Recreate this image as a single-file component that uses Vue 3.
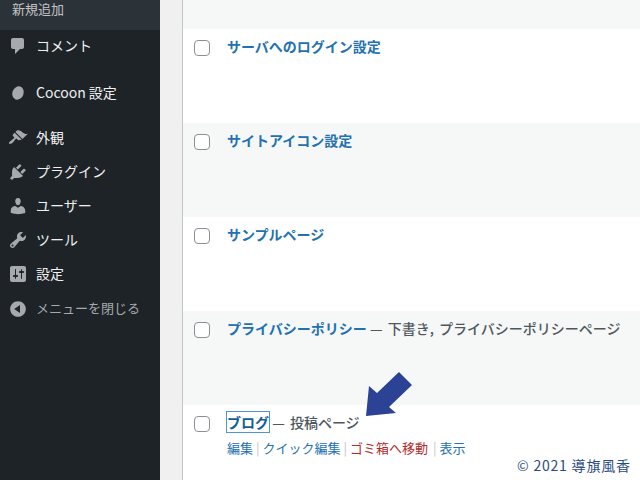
<script setup>
const menu = [
  { label: 'コメント', height: 47, icon: 'M5 2h9c1.1 0 2 .9 2 2v7c0 1.1-.9 2-2 2h-2l-5 5v-5H5c-1.1 0-2-.9-2-2V4c0-1.1.9-2 2-2z' },
  { label: 'Cocoon 設定', height: 45, cocoon: true },
  { label: '外観', height: 34, icon: 'M14.48 11.06L7.41 3.99l1.5-1.5c.5-.56 2.3-.47 3.51.32 1.21.8 1.43 1.28 2.91 2.1 1.18.64 2.45 1.26 4.45.85zm-.71.71L6.7 4.7 4.93 6.47c-.39.39-.39 1.02 0 1.41l1.06 1.06c.39.39.39 1.03 0 1.42-.6.6-1.43 1.11-2.21 1.69-.35.26-.7.53-1.01.84C1.43 13.23.65 15.06 1.3 15.7c.65.65 2.48-.13 3.8-1.47.31-.31.58-.66.85-1.01.57-.78 1.08-1.61 1.69-2.21.39-.39 1.02-.39 1.41 0l1.06 1.06c.39.39 1.02.39 1.41 0z' },
  { label: 'プラグイン', height: 34, icon: 'M13.11 4.36L9.87 7.6 8 5.73l3.24-3.24c.35-.34 1.05-.2 1.56.32.52.51.66 1.21.31 1.55zm-8 1.77l.91-1.12 9.01 9.01-1.19.84c-.71.71-2.63 1.16-3.82 1.16H6.14L4.9 17.26c-.59.59-1.54.59-2.12 0-.59-.58-.59-1.53 0-2.12l1.24-1.24v-3.88c0-1.13.4-3.19 1.09-3.89zm7.26 3.97l3.24-3.24c.34-.35 1.04-.21 1.55.31.52.51.66 1.21.31 1.55l-3.24 3.25z' },
  { label: 'ユーザー', height: 34, icon: 'M10 9.25c-2.27 0-2.73-3.44-2.73-3.44C7 4.02 7.82 2 9.97 2c2.16 0 2.98 2.02 2.71 3.81 0 0-.41 3.44-2.68 3.44zm0 2.57L12.72 10c2.39 0 4.52 2.33 4.52 4.53v2.49s-3.65 1.13-7.24 1.13c-3.65 0-7.24-1.13-7.24-1.13v-2.49c0-2.25 1.94-4.48 4.47-4.48z' },
  { label: 'ツール', height: 34, icon: 'M16.68 9.77c-1.34 1.34-3.3 1.67-4.95.99l-5.41 6.52c-.99.99-2.59.99-3.58 0s-.99-2.59 0-3.57l6.52-5.42c-.68-1.65-.35-3.61.99-4.95 1.28-1.28 3.12-1.62 4.72-1.06l-2.89 2.89 2.82 2.82 2.86-2.87c.53 1.58.18 3.39-1.08 4.65zM3.81 16.21c.4.39 1.04.39 1.43 0 .4-.4.4-1.04 0-1.43-.39-.4-1.03-.4-1.43 0-.39.39-.39 1.03 0 1.43z' },
  { label: '設定', height: 35, icon: 'M18 16V4c0-1.1-.9-2-2-2H4c-1.1 0-2 .9-2 2v12c0 1.1.9 2 2 2h12c1.1 0 2-.9 2-2zM8 11h1c.55 0 1 .45 1 1s-.45 1-1 1H8v1.5c0 .28-.22.5-.5.5s-.5-.22-.5-.5V13H6c-.55 0-1-.45-1-1s.45-1 1-1h1V5.5c0-.28.22-.5.5-.5s.5.22.5.5V11zm5-2h-1c-.55 0-1-.45-1-1s.45-1 1-1h1V5.5c0-.28.22-.5.5-.5s.5.22.5.5V7h1c.55 0 1 .45 1 1s-.45 1-1 1h-1v5.5c0 .28-.22.5-.5.5s-.5-.22-.5-.5V9z' },
  { label: 'メニューを閉じる', height: 34, muted: true, icon: 'M10 2.16c4.33 0 7.84 3.51 7.84 7.84s-3.51 7.84-7.84 7.84S2.16 14.33 2.16 10 5.71 2.16 10 2.16zm2 11.72V6.12L6.18 9.97z' }
]

const rows = [
  { title: 'サーバへのログイン設定' },
  { title: 'サイトアイコン設定' },
  { title: 'サンプルページ' },
  { title: 'プライバシーポリシー', state: ' — 下書き, プライバシーポリシーページ' }
]
</script>

<template>
  <div class="page">
    <aside class="sidebar">
      <div class="submenu">新規追加</div>
      <div
        v-for="item in menu"
        :key="item.label"
        class="menu-item"
        :class="{ muted: item.muted }"
        :style="{ height: item.height + 'px' }"
      >
        <svg class="menu-icon" viewBox="0 0 20 20" width="20" height="20">
          <ellipse v-if="item.cocoon" cx="10" cy="10" rx="5.6" ry="6.8" transform="rotate(20 10 10)" />
          <path v-else :d="item.icon" />
        </svg>
        <span>{{ item.label }}</span>
      </div>
    </aside>

    <main class="content">
      <div class="table">
        <div class="row top-row"></div>
        <div v-for="row in rows" :key="row.title" class="row">
          <span class="check"></span>
          <div class="cell">
            <a class="title">{{ row.title }}</a><span v-if="row.state" class="state">{{ row.state }}</span>
          </div>
        </div>
        <div class="row last-row">
          <span class="check"></span>
          <div class="cell">
            <a class="title focused">ブログ</a><span class="state"> — 投稿ページ</span>
            <div class="actions">
              <a>編集</a><i>|</i><a>クイック編集</a><i>|</i><a class="trash">ゴミ箱へ移動</a><i>|</i><a>表示</a>
            </div>
          </div>
        </div>
      </div>
    </main>

    <svg class="arrow" width="640" height="480" viewBox="0 0 640 480">
      <polygon points="366,416 369,386 377,393 399,372 412,385 389,407 396,413" />
    </svg>
    <div class="copyright">© 2021 導旗風香</div>
  </div>
</template>

<style>
html, body {
  margin: 0;
  overflow: hidden;
}
</style>

<style scoped>
.page {
  position: relative;
  display: flex;
  width: 640px;
  height: 480px;
  overflow: hidden;
  background: #f0f0f1;
  font-family: "Noto Sans CJK JP", "Liberation Sans", sans-serif;
  font-size: 14px;
}

.sidebar {
  flex: 0 0 160px;
  background: #1d2327;
  color: #f0f0f1;
}

.submenu {
  box-sizing: border-box;
  height: 30px;
  margin-bottom: 5px;
  padding-left: 12px;
  background: #2c3338;
  color: #c3c4c7;
  font-size: 13px;
  line-height: 17px;
}

.menu-item {
  display: flex;
  align-items: flex-start;
  gap: 8px;
  padding-left: 8px;
  line-height: 20px;
}

.menu-icon {
  flex: none;
  margin-top: 1px;
  fill: #a7aaad;
}

.muted {
  color: #a7aaad;
  font-size: 13px;
}

.content {
  flex: 1;
  margin-left: 22px;
  border-left: 1px solid #c3c4c7;
  background: #fff;
}

.row {
  display: flex;
  gap: 17px;
  box-sizing: border-box;
  height: 94px;
  padding: 7px 0 0 11px;
}

.row:nth-child(odd) {
  background: #f6f7f7;
}

.top-row {
  height: 29px;
}

.last-row {
  height: 75px;
}

.check {
  flex: none;
  box-sizing: border-box;
  width: 16px;
  height: 16px;
  margin-top: 4px;
  border: 1px solid #8c8f94;
  border-radius: 4px;
  background: #fff;
}

.cell {
  line-height: 20px;
  color: #50575e;
}

.title {
  color: #2271b1;
  font-weight: 700;
}

.state {
  margin-left: -2px;
  word-spacing: 2px;
  font-weight: 500;
  color: #50575e;
}

.focused {
  color: #135e96;
  box-shadow: 0 0 0 1px #4f94d4;
}

.actions {
  margin-top: 7px;
  font-size: 13px;
  line-height: 18px;
  color: #2271b1;
}

.actions i {
  padding: 0 3px;
  font-style: normal;
  color: #c3c4c7;
}

.trash {
  margin-right: 2px;
  color: #b32d2e;
}

.arrow {
  position: absolute;
  left: 0;
  top: 0;
  fill: #2c4295;
}

.copyright {
  position: absolute;
  left: 517px;
  top: 456px;
  color: #2b4a85;
  font-size: 14px;
  line-height: 18px;
  letter-spacing: 0.8px;
}
</style>
